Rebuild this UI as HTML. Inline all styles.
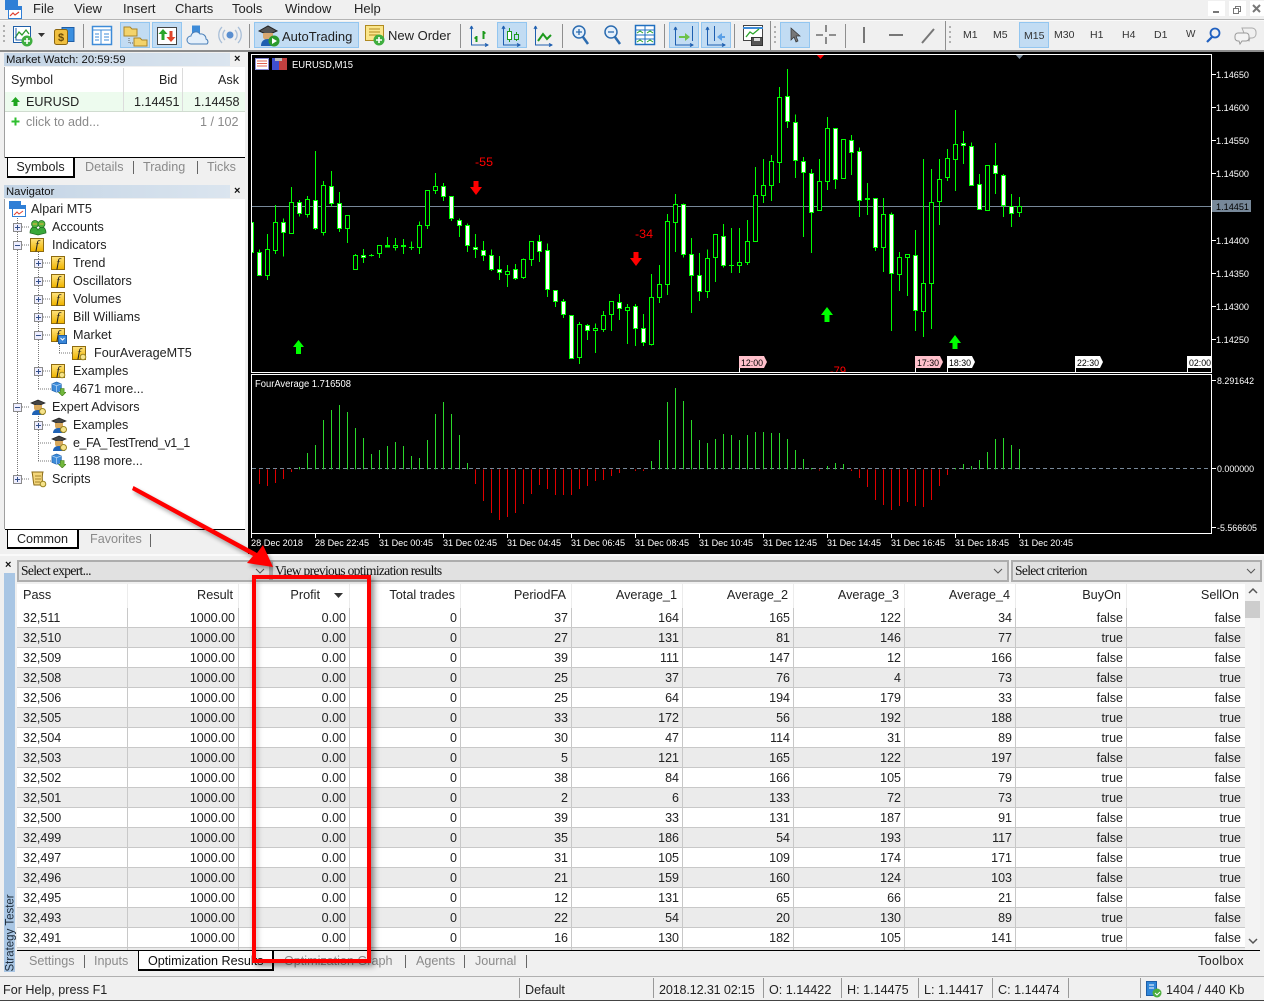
<!DOCTYPE html>
<html lang="en"><head><meta charset="utf-8"><title>MetaTrader 5</title>
<style>
html,body{margin:0;padding:0}
body{width:1264px;height:1001px;position:relative;overflow:hidden;background:#f0f0f0;font-family:"Liberation Sans",sans-serif;font-size:12.6px;color:#222}
.a{position:absolute;white-space:nowrap;line-height:16px}
.m{font-size:13px}
.g{color:#8a8a8a}
.box{position:absolute;background:#fff}
.tb{position:absolute;background:linear-gradient(90deg,#c3d4e5,#dbe5ef);height:13px;font-size:11.3px;line-height:14px;padding-left:2px;color:#111}
.x{position:absolute;font-weight:bold;font-size:11px;line-height:11px;color:#111}
.tab{position:absolute;background:#fff;border:1px solid #000;border-top:0;border-width:0 2px 2px 1px;box-sizing:border-box;text-align:center;line-height:18px}
.sep{position:absolute;width:1px;background:#666}
.f{position:absolute;width:12px;height:12px;background:linear-gradient(#ffe27a,#f0b400);border:1px solid #8d6a10;font:italic 13px/12px "Liberation Serif",serif;color:#222;text-align:center}
.tree{position:absolute;left:0;top:0}
.combo{position:absolute;top:560px;height:18px;background:#e1e1e1;border:2px solid #adadad;font-family:"Liberation Serif",serif;font-size:13.5px;line-height:18px;padding-left:2px;letter-spacing:-.65px;white-space:nowrap;overflow:hidden;color:#111}
#tbl{position:absolute;left:17px;top:584px;height:367px;width:1228px;overflow:hidden;background:#fff}
table{border-collapse:separate;border-spacing:0;table-layout:fixed;width:1228px;font-size:12.5px}
th{height:24px;font-weight:normal;font-size:12.7px;text-align:right;padding:0 5px 2px 0;border-right:1px solid #ececec;box-sizing:border-box;color:#222}
td{height:20px;box-sizing:border-box;text-align:right;padding:2px 3px 0 0;border-right:1px solid #c8c8c8;border-bottom:1px solid #c8c8c8;line-height:17px;overflow:hidden}
tr:nth-child(even) td{background:#ebebeb}
td:first-child{text-align:left;padding-left:6px}
th:first-child{text-align:left;padding-left:6px}
th:last-child{padding-right:6px}
td:last-child{padding-right:4px;border-right:0}
th:last-child{border-right:0}
</style></head><body>

<!-- top toolbars -->
<svg class="tree" width="1264" height="54" viewBox="0 0 1264 54">
<rect x="0" y="19" width="1264" height="1" fill="#b4b4b4"/>
<rect x="0" y="20" width="1264" height="1" fill="#fafafa"/>
<rect x="0" y="50" width="1264" height="2" fill="#8c8c8c"/>
<!-- app icon -->
<rect x="5" y="0" width="13" height="10" fill="#2f7fd6"/>
<rect x="8.5" y="6.5" width="13" height="12" fill="#fff" stroke="#2f7fd6"/>
<rect x="9" y="7" width="12" height="3" fill="#2f7fd6"/>
<path d="M10 16l3-3 2 2 4-3" fill="none" stroke="#e04030" stroke-width="1.2"/>
<!-- highlights -->
<g fill="#c2dcf3" stroke="#93c6f0">
<rect x="120.5" y="22.5" width="29" height="25"/>
<rect x="152.5" y="22.5" width="29" height="25"/>
<rect x="254.5" y="22.5" width="104" height="25"/>
<rect x="497.5" y="22.5" width="29" height="25"/>
<rect x="669.5" y="22.5" width="29" height="25"/>
<rect x="701.5" y="22.5" width="29" height="25"/>
<rect x="780.5" y="22.5" width="29" height="25"/>
<rect x="1019.5" y="22.5" width="29" height="25"/>
</g>
<!-- separators -->
<g fill="#8f8f8f">
<rect x="83" y="24" width="1" height="24"/><rect x="249" y="24" width="1" height="24"/>
<rect x="460" y="24" width="1" height="24"/><rect x="562" y="24" width="1" height="24"/>
<rect x="664" y="24" width="1" height="24"/><rect x="734" y="24" width="1" height="24"/>
<rect x="770" y="21" width="1" height="29"/><rect x="845" y="24" width="1" height="24"/>
<rect x="945" y="21" width="1" height="29"/>
</g>
<!-- grips -->
<g fill="#b0b0b0"><rect x="3" y="25" width="2" height="2"/><rect x="3" y="30" width="2" height="2"/><rect x="3" y="35" width="2" height="2"/><rect x="3" y="40" width="2" height="2"/>
<rect x="774" y="26" width="2" height="2"/><rect x="774" y="31" width="2" height="2"/><rect x="774" y="36" width="2" height="2"/><rect x="774" y="41" width="2" height="2"/>
<rect x="949" y="26" width="2" height="2"/><rect x="949" y="31" width="2" height="2"/><rect x="949" y="36" width="2" height="2"/><rect x="949" y="41" width="2" height="2"/></g>
<!-- new chart -->
<rect x="13.5" y="26.5" width="17" height="16" fill="#fff" stroke="#1f5fa8"/><path d="M15 38l4-6 3 3 4-5 3 4" fill="none" stroke="#2a9a2a" stroke-width="1.3"/><path d="M16 28v12h12" fill="none" stroke="#1f5fa8"/>
<circle cx="27" cy="41" r="5.5" fill="#3fae3f"/><path d="M27 38v6M24 41h6" stroke="#fff" stroke-width="1.6"/>
<path d="M38 33h7l-3.500 4z" fill="#333"/>
<!-- dollar -->
<rect x="62" y="27.500" width="12" height="14" fill="#3a8fe0" stroke="#1d5ea8"/>
<rect x="54.500" y="29.500" width="13" height="15" rx="2" fill="#f0c040" stroke="#8a6510"/><text x="61" y="41" font-size="11" font-weight="bold" text-anchor="middle" fill="#6a4a05">$</text>
<!-- market watch -->
<rect x="92.500" y="26.500" width="19" height="18" fill="#fff" stroke="#3d8bd8" stroke-width="1.500"/><path d="M92 30h20M101 30v14M95 34h4M95 37h4M95 40h4M104 34h5M104 37h5M104 40h5" stroke="#3d8bd8"/>
<!-- navigator folders -->
<path d="M124 27h6l2 2h5v7h-13z" fill="#f3d36b" stroke="#a8842a"/><path d="M134 38h6l2 2h5v6h-13z" fill="#f3d36b" stroke="#a8842a"/><path d="M129 38v5h4" fill="none" stroke="#666" stroke-dasharray="1 1"/>
<!-- toolbox -->
<rect x="157.500" y="27.500" width="19" height="17" fill="#fff" stroke="#444"/><path d="M163 29l-4.500 5h3v6h3v-6h3z" fill="#2aa52a"/><path d="M171 42l4.500-5h-3v-6h-3v6h-3z" fill="#e0452a"/>
<!-- cloud -->
<rect x="192" y="25.500" width="8" height="10" fill="#3d8bd8"/><path d="M191 44a4 4 0 0 1 0-8 5 5 0 0 1 9-2 5 5 0 0 1 6 5 3 3 0 0 1 1 5z" fill="#e4effa" stroke="#4a7fb8"/>
<!-- radar -->
<circle cx="230" cy="35" r="3.500" fill="#5a8fd0"/><path d="M225 30a7 7 0 0 0 0 10M235 30a7 7 0 0 1 0 10M222 27a11.500 11.500 0 0 0 0 16M238 27a11.500 11.500 0 0 1 0 16" fill="none" stroke="#a9bfd8" stroke-width="1.300"/>
<!-- autotrading -->
<path d="M259 31l9-5 9 5-9 4z" fill="#555" stroke="#222"/><path d="M263 33v4c0 2 3 3 5 3s5-1 5-3v-4" fill="#d8a770"/>
<path d="M261 46c0-5 3-7 7-7s7 2 7 7z" fill="#1f5fb0"/><circle cx="274" cy="41" r="5.500" fill="#2c9a2c"/><path d="M272 38l5 3-5 3z" fill="#fff"/>
<!-- new order -->
<rect x="365.500" y="25.500" width="18" height="15" fill="#fbe68a" stroke="#b08a20"/><path d="M369 29h11M369 32h11M369 35h11" stroke="#b08a20"/><circle cx="379" cy="40" r="5.500" fill="#3fae3f"/><path d="M379 37v6M376 40h6" stroke="#fff" stroke-width="1.600"/>
<!-- chart type -->
<g fill="none" stroke="#1f5fb0"><path d="M471.500 26v19h17M471.500 26l-1.500 3M471.500 26l1.500 3M488 45l-3-1.500M488 45l-3 1.500"/>
<path d="M503.500 26v19h17M503.500 26l-1.500 3M503.500 26l1.500 3M520 45l-3-1.500M520 45l-3 1.500"/>
<path d="M535.500 26v19h17M535.500 26l-1.500 3M535.500 26l1.500 3M552 45l-3-1.500M552 45l-3 1.500"/></g>
<path d="M476.500 36v6M476.500 38h-2M483.500 31v8M483.500 33h2" stroke="#1d9a1d" stroke-width="2" fill="none"/>
<path d="M509.500 28v14M516.500 32v9" stroke="#1d9a1d"/><rect x="507.500" y="31.500" width="4" height="8" fill="#fff" stroke="#1d9a1d"/><rect x="514.500" y="34.500" width="4" height="5" fill="#c2dcf3" stroke="#1d9a1d"/>
<path d="M538 41l5-7 4 5 4-4" fill="none" stroke="#1d9a1d" stroke-width="2"/>
<!-- zoom -->
<g fill="none"><circle cx="579" cy="32" r="6" fill="#e5f0fb" stroke="#2c6cb0" stroke-width="1.500"/><path d="M576 32h6M579 29v6" stroke="#2c6cb0" stroke-width="1.300"/><path d="M583 37l5 7" stroke="#2c6cb0" stroke-width="2.500"/>
<circle cx="611" cy="32" r="6" fill="#e5f0fb" stroke="#2c6cb0" stroke-width="1.500"/><path d="M608 32h6" stroke="#2c6cb0" stroke-width="1.300"/><path d="M615 37l5 7" stroke="#2c6cb0" stroke-width="2.500"/></g>
<!-- tile -->
<rect x="635.500" y="25.500" width="19" height="19" fill="#fff" stroke="#1f6fc0" stroke-width="1.500"/><path d="M635 30h20M645 25v20M635 35h20M635 39h20" stroke="#1f6fc0"/><path d="M637 33l3-2 3 2M647 33l3-2 3 2M637 42l3-2 3 2M647 42l3-2 3 2" fill="none" stroke="#2aa52a"/>
<!-- autoscroll / shift -->
<g fill="none" stroke="#1f5fb0"><path d="M675.500 27v18h18M675.500 27l-1.500 3M675.500 27l1.500 3M693 45l-3-1.500M693 45l-3 1.500"/><path d="M707.500 27v18h18M707.500 27l-1.500 3M707.500 27l1.500 3M725 45l-3-1.500M725 45l-3 1.500"/><path d="M692.500 26v15M714.500 26v15"/></g>
<path d="M679 38h6v3l5-4-5-4v3h-6z" fill="#6cc24a"/><path d="M725 38h-3v3l-5-4 5-4v3h3z" fill="#5a9fe6"/>
<!-- template -->
<rect x="743.500" y="25.500" width="19" height="15" fill="#fff" stroke="#444"/><path d="M743 28h20" stroke="#3d8bd8" stroke-width="2"/><path d="M746 37l4-5 3 2 6-5" fill="none" stroke="#2aa52a" stroke-width="1.300"/><rect x="751.500" y="37.500" width="11" height="8" fill="#555" stroke="#333"/><rect x="754" y="38" width="6" height="3" fill="#ddd"/>
<!-- cursor/tools -->
<path d="M791 28l9 8h-4l2 5-2 1-2-5-3 3z" fill="#777" stroke="#333" stroke-width=".7"/>
<path d="M826 25v7M826 37v7M816 35h7M829 35h7" stroke="#555" stroke-width="1.300"/>
<path d="M864 27v16" stroke="#777" stroke-width="2"/><path d="M889 35h14" stroke="#777" stroke-width="2"/><path d="M922 43l12-14" stroke="#777" stroke-width="2"/>
<!-- search / chat -->
<circle cx="1215" cy="33" r="4.500" fill="none" stroke="#2060c0" stroke-width="1.800"/><path d="M1212 37l-5 5" stroke="#2060c0" stroke-width="2.200"/>
<path d="M1242 28h10a4 4 0 0 1 4 4v2a4 4 0 0 1-4 4h-2l-1 3-3-3z" fill="#f0f0f0" stroke="#aaa"/><path d="M1238 33h8a3 3 0 0 1 3 3v2a3 3 0 0 1-3 3h-4l-2 3-1-3h-1a3 3 0 0 1-3-3v-2a3 3 0 0 1 3-3z" fill="#f4f4f4" stroke="#999"/>
<!-- window buttons -->
<rect x="1208" y="1" width="17" height="15" fill="#fff"/><rect x="1229" y="1" width="17" height="15" fill="#fff"/><rect x="1250" y="1" width="14" height="15" fill="#fff"/>
<rect x="1213" y="11" width="6" height="2" fill="#777"/>
<rect x="1235.500" y="6.500" width="5" height="5" fill="none" stroke="#777"/><rect x="1233.500" y="8.500" width="5" height="5" fill="#fff" stroke="#777"/>
<path d="M1253 5l7 7M1260 5l-7 7" stroke="#777" stroke-width="2"/>
</svg>

<!-- menu -->
<div class="a m" style="left:33px;top:1px">File</div>
<div class="a m" style="left:74px;top:1px">View</div>
<div class="a m" style="left:123px;top:1px">Insert</div>
<div class="a m" style="left:175px;top:1px">Charts</div>
<div class="a m" style="left:232px;top:1px">Tools</div>
<div class="a m" style="left:285px;top:1px">Window</div>
<div class="a m" style="left:354px;top:1px">Help</div>
<div class="a m" style="left:282px;top:29px">AutoTrading</div>
<div class="a m" style="left:388px;top:28px">New Order</div>
<div class="a" style="left:963px;top:27px;font-size:10.5px;color:#333">M1</div>
<div class="a" style="left:993px;top:27px;font-size:10.5px;color:#333">M5</div>
<div class="a" style="left:1024px;top:28px;font-size:10.5px;color:#333">M15</div>
<div class="a" style="left:1054px;top:27px;font-size:10.5px;color:#333">M30</div>
<div class="a" style="left:1090px;top:27px;font-size:10.5px;color:#333">H1</div>
<div class="a" style="left:1122px;top:27px;font-size:10.5px;color:#333">H4</div>
<div class="a" style="left:1154px;top:27px;font-size:10.5px;color:#333">D1</div>
<div class="a" style="left:1186px;top:27px;font-size:10px;color:#333">W</div>

<!-- Market watch -->
<div class="tb" style="left:4px;top:53px;width:224px">Market Watch: 20:59:59</div>
<div class="x" style="left:234px;top:54px">×</div>
<div class="box" style="left:4px;top:67px;width:241px;height:91px;border-left:1px solid #a0a0a0;box-sizing:border-box"></div>
<div class="box" style="left:5px;top:92px;width:240px;height:19px;background:#edfbee;border-bottom:1px solid #d0dcd0"></div>
<div class="sep" style="left:123px;top:68px;height:43px;background:#dcdcdc"></div>
<div class="sep" style="left:182px;top:68px;height:43px;background:#dcdcdc"></div>
<div class="a" style="left:11px;top:72px">Symbol</div>
<div class="a" style="left:159px;top:72px">Bid</div>
<div class="a" style="left:218px;top:72px">Ask</div>
<svg class="tree" style="left:10px;top:96px" width="11" height="11"><path d="M5.500 1L10 6H7.500V10h-4V6H1z" fill="#1fa51f"/></svg>
<div class="a" style="left:26px;top:94px">EURUSD</div>
<div class="a" style="left:134px;top:94px">1.14451</div>
<div class="a" style="left:194px;top:94px">1.14458</div>
<svg class="tree" style="left:10px;top:116px" width="11" height="11"><path d="M5.500 1.500v8M1.500 5.500h8" stroke="#2fbf2f" stroke-width="2"/></svg>
<div class="a g" style="left:26px;top:114px">click to add...</div>
<div class="a g" style="left:200px;top:114px">1 / 102</div>
<div class="box" style="left:5px;top:157px;width:240px;height:1px;background:#000"></div>
<div class="tab" style="left:7px;top:158px;width:68px;height:20px;border-right:2px solid #000">Symbols</div>
<div class="a g" style="left:85px;top:159px">Details</div><div class="sep" style="left:133px;top:161px;height:13px"></div>
<div class="a g" style="left:143px;top:159px">Trading</div><div class="sep" style="left:197px;top:161px;height:13px"></div>
<div class="a g" style="left:207px;top:159px">Ticks</div>

<!-- Navigator -->
<div class="tb" style="left:4px;top:185px;width:224px">Navigator</div>
<div class="x" style="left:234px;top:186px">×</div>
<div class="box" style="left:4px;top:199px;width:241px;height:330px;border-left:1px solid #a0a0a0;box-sizing:border-box"></div>
<div class="box" style="left:5px;top:529px;width:240px;height:1px;background:#000"></div>
<div class="tab" style="left:7px;top:530px;width:72px;height:19px">Common</div>
<div class="a g" style="left:90px;top:531px">Favorites</div><div class="sep" style="left:150px;top:534px;height:13px"></div>

<svg class="tree" width="250" height="500" viewBox="0 0 250 500">
<defs>
<symbol id="plus" viewBox="0 0 9 9"><rect x=".5" y=".5" width="8" height="8" fill="#eef" stroke="#8a8a8a"/><path d="M2 4.500h5M4.500 2v5" stroke="#33508a"/></symbol>
<symbol id="minus" viewBox="0 0 9 9"><rect x=".5" y=".5" width="8" height="8" fill="#eef" stroke="#8a8a8a"/><path d="M2 4.500h5" stroke="#33508a"/></symbol>
<symbol id="hat" viewBox="0 0 16 16"><path d="M1 4l7-3 7 3-7 3z" fill="#444" stroke="#222" stroke-width=".7"/><path d="M4 6v3c0 2 2 3 4 3s4-1 4-3V6" fill="#d8a85c"/><path d="M2 16c0-3 2-5 6-5s6 2 6 5z" fill="#1f62b5"/><circle cx="12.500" cy="12.500" r="3" fill="#f6e38a" stroke="#9a8420"/></symbol>
<symbol id="cube" viewBox="0 0 16 16"><path d="M1 3l5-2 5 2v7l-5 2-5-2z" fill="#3d8bd8" stroke="#1d5ea8" stroke-width=".7"/><path d="M6 5v7M1 3l5 2 5-2" stroke="#b8d8f8" fill="none" stroke-width=".8"/><path d="M10 8h4v4h2l-4 4-4-4h2z" fill="#72b83c" stroke="#3f7a18" stroke-width=".6"/></symbol>
</defs>
<!-- dotted lines -->
<g stroke="#777" stroke-dasharray="1 1" fill="none">
<path d="M17.500 214V479M38.500 250V389M38.500 412V461M59.500 340V353"/>
<path d="M22 227h8M22 245h8M22 407h8M22 479h8M43 263h8M43 281h8M43 299h8M43 317h8M43 335h8M43 371h8M43 425h8M38 389h13M38 443h13M38 461h13M59 353h13"/>
</g>
<!-- root icon -->
<rect x="9" y="201" width="12" height="8" fill="#2f7fd6"/><rect x="12.500" y="205.500" width="13" height="11" fill="#fff" stroke="#2f7fd6"/><rect x="13" y="206" width="12" height="3" fill="#2f7fd6"/><path d="M14 215l3-3 2 2 4-3" fill="none" stroke="#e04030"/>
<!-- expanders -->
<use href="#plus" x="13" y="223" width="9" height="9"/><use href="#minus" x="13" y="241" width="9" height="9"/>
<use href="#plus" x="34" y="259" width="9" height="9"/><use href="#plus" x="34" y="277" width="9" height="9"/><use href="#plus" x="34" y="295" width="9" height="9"/><use href="#plus" x="34" y="313" width="9" height="9"/>
<use href="#minus" x="34" y="331" width="9" height="9"/><use href="#plus" x="34" y="367" width="9" height="9"/>
<use href="#minus" x="13" y="403" width="9" height="9"/><use href="#plus" x="34" y="421" width="9" height="9"/><use href="#plus" x="13" y="475" width="9" height="9"/>
<!-- accounts -->
<path d="M30 233c0-4 2-6 4-6s3 1 4 3c1-2 3-3 4-3 2 0 4 2 4 6l-8 2z" fill="#39a83a" stroke="#1f6a20" stroke-width=".7"/><circle cx="35" cy="224" r="3.500" fill="#55b53c" stroke="#1f6a20" stroke-width=".7"/><circle cx="41.500" cy="224" r="3.500" fill="#55b53c" stroke="#1f6a20" stroke-width=".7"/><path d="M33 224h4M39.500 224h4" stroke="#f0b040"/>
<use href="#cube" x="51" y="381" width="15" height="15"/><use href="#cube" x="51" y="453" width="15" height="15"/>
<use href="#hat" x="30" y="399" width="16" height="16"/><use href="#hat" x="51" y="417" width="16" height="16"/><use href="#hat" x="51" y="435" width="16" height="16"/>
<!-- scripts -->
<path d="M32 472h11c-1 3-1 9 0 13H34c-1-4-1-9-2-13z" fill="#f4d67a" stroke="#8a6a15"/><path d="M35 476h6M35 479h6M35 482h5" stroke="#8a6a15" stroke-width=".7"/><circle cx="43" cy="484" r="2.800" fill="#f6e38a" stroke="#9a8420"/>
</svg>
<i class="f" style="left:30px;top:238px">f</i>
<i class="f" style="left:51px;top:256px">f</i>
<i class="f" style="left:51px;top:274px">f</i>
<i class="f" style="left:51px;top:292px">f</i>
<i class="f" style="left:51px;top:310px">f</i>
<i class="f" style="left:51px;top:328px">f</i>
<svg class="tree" style="left:58px;top:334px" width="10" height="10"><rect x=".5" y="1.500" width="8" height="8" fill="#3a86d8" stroke="#1d5ea8"/><path d="M2.500 4l2 2 2-2" fill="none" stroke="#fff"/></svg>
<i class="f" style="left:72px;top:346px">f</i>
<i class="f" style="left:51px;top:364px">f</i>
<svg class="tree" style="left:59px;top:343px" width="30" height="40"><circle cx="24" cy="14" r="2.800" fill="#f6e38a" stroke="#9a8420"/><circle cx="3" cy="32" r="2.800" fill="#f6e38a" stroke="#9a8420"/></svg>
<div class="a" style="left:31px;top:201px">Alpari MT5</div>
<div class="a" style="left:52px;top:219px">Accounts</div>
<div class="a" style="left:52px;top:237px">Indicators</div>
<div class="a" style="left:73px;top:255px">Trend</div>
<div class="a" style="left:73px;top:273px">Oscillators</div>
<div class="a" style="left:73px;top:291px">Volumes</div>
<div class="a" style="left:73px;top:309px">Bill Williams</div>
<div class="a" style="left:73px;top:327px">Market</div>
<div class="a" style="left:94px;top:345px">FourAverageMT5</div>
<div class="a" style="left:73px;top:363px">Examples</div>
<div class="a" style="left:73px;top:381px">4671 more...</div>
<div class="a" style="left:52px;top:399px">Expert Advisors</div>
<div class="a" style="left:73px;top:417px">Examples</div>
<div class="a" style="left:73px;top:435px;letter-spacing:-.5px">e_FA_TestTrend_v1_1</div>
<div class="a" style="left:73px;top:453px">1198 more...</div>
<div class="a" style="left:52px;top:471px">Scripts</div>

<!-- Chart -->
<svg class="tree" style="left:248px;top:52px" width="1016" height="502" viewBox="248 52 1016 502" font-family="Liberation Sans, sans-serif">
<defs><clipPath id="c1"><rect x="252" y="55" width="959" height="317"/></clipPath></defs>
<rect x="248" y="52" width="1016" height="502" fill="#000"/>
<g fill="none" stroke="#fff" shape-rendering="crispEdges">
<path d="M251.500 372.500V54.500H1211.500V372.500"/><path d="M251 372.500H1212"/>
<rect x="251.500" y="374.500" width="960" height="159"/>
<path d="M251.500 534v4M315.500 534v4M379.500 534v4M443.500 534v4M507.500 534v4M571.500 534v4M635.500 534v4M699.500 534v4M763.500 534v4M827.500 534v4M891.500 534v4M955.500 534v4M1019.500 534v4"/>
<path d="M1212 74.500h4M1212 107.500h4M1212 140.500h4M1212 173.500h4M1212 240.500h4M1212 273.500h4M1212 306.500h4M1212 339.500h4M1212 380.500h4M1212 468.500h4M1212 527.500h4"/>
</g>
<path d="M252 206.500H1211" stroke="#778899" shape-rendering="crispEdges"/>
<path d="M252 468.500H1211" stroke="#778899" stroke-dasharray="4 3" shape-rendering="crispEdges"/>
<g clip-path="url(#c1)">
<g transform="translate(250 50) scale(.33333)" stroke="#0f0" stroke-width="3" shape-rendering="crispEdges">
<path fill="none" d="M28.500 598V677M52.500 552V690M76.500 465V612M100.500 505V620M124.500 411V551M148.500 450V500M172.500 438V503M196.500 303V540M220.500 393V557M244.500 363V470M268.500 426V546M292.500 495V579M316.500 612V659M340.500 597V639M364.500 612V620M388.500 586V624M412.500 561V593M436.500 564V602M460.500 567V612M484.500 575V600M508.500 514V612M532.500 421V537M556.500 369V432M580.500 399V453M604.500 438V513M628.500 505V561M652.500 520V606M676.500 552V624M700.500 573V633M724.500 598V663M748.500 618V690M772.500 645V711M796.500 642V690M820.500 625V687M844.500 574V648M868.500 555V636M892.500 580V741M916.500 721V771M940.500 747V804M988.500 816V942M1012.500 822V870M1036.500 820V909M1060.500 783V846M1084.500 754V843M1108.500 732V810M1132.500 762V882M1156.500 762V888M1180.500 792V888"/>
<path fill="#000" d="M46.500 598h12v79h-12zM70.500 517h12v84h-12zM118.500 457h12v94h-12zM166.500 448h12v46h-12zM214.500 406h12v142h-12zM286.500 496h12v40h-12zM310.500 616h12v43h-12zM382.500 586h12v25h-12zM430.500 586h12v7h-12zM502.500 526h12v67h-12zM526.500 421h12v106h-12zM550.500 409h12v13h-12zM766.500 664h12v10h-12zM814.500 628h12v55h-12zM838.500 574h12v55h-12zM982.500 823h12v100h-12zM1030.500 835h12v7h-12zM1054.500 796h12v43h-12zM1078.500 754h12v40h-12zM1126.500 772h12v10h-12z"/>
<path fill="#fff" d="M-1.500 517h12v90h-12zM22.500 607h12v70h-12zM94.500 517h12v30h-12zM142.500 457h12v33h-12zM190.500 451h12v85h-12zM238.500 409h12v52h-12zM262.500 460h12v76h-12zM334.500 616h12v7h-12zM574.500 409h12v31h-12zM598.500 439h12v67h-12zM622.500 511h12v16h-12zM646.500 526h12v61h-12zM670.500 592h12v6h-12zM694.500 601h12v16h-12zM718.500 616h12v43h-12zM742.500 658h12v9h-12zM790.500 658h12v28h-12zM862.500 574h12v30h-12zM886.500 601h12v117h-12zM910.500 721h12v34h-12zM934.500 754h12v40h-12zM958.500 796h12v130h-12zM1006.500 826h12v16h-12zM1102.500 757h12v19h-12zM1150.500 769h12v67h-12zM1174.500 835h12v43h-12z"/>
<path fill="#0f0" d="M358.500 616h12v1h-12zM406.500 586h12v5h-12zM454.500 586h12v4h-12zM478.500 592h12v1h-12z"/>
</g>
<g transform="translate(640 50) scale(.33333)" stroke="#0f0" stroke-width="3" shape-rendering="crispEdges">
<path fill="none" d="M34.500 672V886M58.500 645V759M82.500 492V735M106.500 432V606M130.500 460V623M154.500 564V789M178.500 609V753M202.500 598V744M226.500 553V696M250.500 522V653M274.500 534V669M298.500 534V669M322.500 510V645M346.500 351V575M370.500 327V459M394.500 315V453M418.500 111V399M442.500 57V234M466.500 193V384M490.500 321V561M514.500 357V609M538.500 327V483M562.500 201V420M586.500 235V417M610.500 268V387M634.500 255V375M658.500 292V501M682.500 399V495M706.500 445V603M730.500 444V666M754.500 487V843M778.500 606V723M802.500 612V738M826.500 540V843M850.500 327V861M874.500 357V837M898.500 327V525M922.500 297V393M946.500 180V423M970.500 243V342M994.500 277V408M1018.500 372V480M1042.500 345V483M1066.500 279V432M1090.500 372V501M1114.500 432V531M1138.500 441V501M274.500 646V647"/>
<path fill="#000" d="M28.500 742h12v142h-12zM52.500 703h12v40h-12zM76.500 514h12v190h-12zM100.500 463h12v55h-12zM196.500 625h12v100h-12zM220.500 553h12v70h-12zM292.500 637h12v10h-12zM316.500 574h12v64h-12zM340.500 436h12v139h-12zM364.500 406h12v31h-12zM388.500 334h12v73h-12zM412.500 142h12v196h-12zM532.500 394h12v88h-12zM556.500 235h12v160h-12zM604.500 268h12v118h-12zM724.500 493h12v100h-12zM772.500 622h12v52h-12zM796.500 613h12v10h-12zM844.500 700h12v85h-12zM868.500 457h12v244h-12zM892.500 388h12v67h-12zM916.500 325h12v58h-12zM940.500 283h12v46h-12zM1036.500 346h12v136h-12zM1132.500 469h12v19h-12z"/>
<path fill="#fff" d="M4.500 835h12v43h-12zM124.500 463h12v150h-12zM148.500 613h12v64h-12zM172.500 676h12v49h-12zM244.500 559h12v88h-12zM436.500 139h12v75h-12zM460.500 217h12v115h-12zM484.500 334h12v33h-12zM508.500 370h12v118h-12zM580.500 235h12v154h-12zM628.500 271h12v37h-12zM652.500 304h12v148h-12zM700.500 445h12v148h-12zM748.500 493h12v178h-12zM820.500 616h12v166h-12zM964.500 280h12v7h-12zM988.500 289h12v117h-12zM1012.500 403h12v76h-12zM1060.500 346h12v25h-12zM1084.500 376h12v91h-12zM1108.500 469h12v22h-12z"/>
<path fill="#0f0" d="M268.500 646h12v1h-12zM676.500 445h12v4h-12z"/>
</g>
<!-- arrows -->
<g fill="#0f0"><path d="M298.500 340l5.500 7h-3v7h-5v-7h-3z"/><path d="M827 307l6 8h-3.500v7h-5v-7h-3.500z"/><path d="M955 335l6 8h-3.500v6h-5v-6h-3.500z"/></g>
<g fill="#f00"><path d="M476 195l-6-8h3.500v-6h5v6h3.500z"/><path d="M636 266l-6-8h3.500v-6h5v6h3.500z"/></g>
<g fill="#f00" font-size="12"><text x="475" y="166" textLength="18" lengthAdjust="spacingAndGlyphs">-55</text><text x="635" y="238" textLength="18" lengthAdjust="spacingAndGlyphs">-34</text><text x="830" y="375" textLength="16" lengthAdjust="spacingAndGlyphs">-79</text></g>
<path d="M816 54h9l-4.500 5z" fill="#f00"/><path d="M1015 54h9l-4.500 5z" fill="#778899"/>
<!-- tags -->
<g stroke="#fff"><path d="M739.500 368v4M915.500 368v4M947.500 368v4M1075.500 368v4M1187.500 368v4" shape-rendering="crispEdges"/></g>
<g font-size="9.500" fill="#000">
<path d="M739 356h25l3 6-3 6h-25z" fill="#ffc0cb"/><text x="741" y="366" textLength="22" lengthAdjust="spacingAndGlyphs">12:00</text>
<path d="M915 356h25l3 6-3 6h-25z" fill="#ffc0cb"/><text x="917" y="366" textLength="22" lengthAdjust="spacingAndGlyphs">17:30</text>
<path d="M947 356h25l3 6-3 6h-25z" fill="#fff"/><text x="949" y="366" textLength="22" lengthAdjust="spacingAndGlyphs">18:30</text>
<path d="M1075 356h25l3 6-3 6h-25z" fill="#fff"/><text x="1077" y="366" textLength="22" lengthAdjust="spacingAndGlyphs">22:30</text>
<path d="M1187 356h24v12h-24z" fill="#fff"/><text x="1189" y="366" textLength="22" lengthAdjust="spacingAndGlyphs">02:00</text>
</g>
</g>
<!-- histogram -->
<g transform="translate(0 370) scale(1 .33333)" stroke-width="1" shape-rendering="crispEdges" fill="none">
<path stroke="#2ad82a" d="M299.500 298V291M307.500 298V249M315.500 298V225M323.500 298V150M331.500 298V120M339.500 298V105M347.500 298V126M355.500 298V174M363.500 298V204M371.500 298V252M379.500 298V240M387.500 298V228M395.500 298V216M403.500 298V228M411.500 298V258M419.500 298V264M427.500 298V210M435.500 298V132M443.500 298V96M451.500 298V132M459.500 298V195M467.500 298V279M651.500 298V273M659.500 298V210M667.500 298V96M675.500 298V54M683.500 298V93M691.500 298V150M699.500 298V210M707.500 298V219M715.500 298V207M723.500 298V192M731.500 298V195M739.500 298V210M747.500 298V195M755.500 298V186M763.500 298V186M771.500 298V189M779.500 298V189M787.500 298V207M795.500 298V240M803.500 298V267M811.500 298V294M827.500 298V288M835.500 298V279M843.500 298V282M955.500 298V294M963.500 298V282M971.500 298V288M979.500 298V270M987.500 298V246M995.500 298V207M1003.500 298V204M1011.500 298V225M1019.500 298V237"/>
<path stroke="#e00000" d="M259.500 298V342M267.500 298V348M275.500 298V339M283.500 298V327M291.500 298V306M475.500 298V342M483.500 298V393M491.500 298V429M499.500 298V450M507.500 298V441M515.500 298V429M523.500 298V402M531.500 298V372M539.500 298V345M547.500 298V357M555.500 298V375M563.500 298V375M571.500 298V375M579.500 298V357M587.500 298V348M595.500 298V333M603.500 298V330M611.500 298V318M619.500 298V309M635.500 298V303M643.500 298V303M819.500 298V302M851.500 298V303M859.500 298V324M867.500 298V351M875.500 298V390M883.500 298V405M891.500 298V420M899.500 298V408M907.500 298V396M915.500 298V408M923.500 298V411M931.500 298V390M939.500 298V348M947.500 298V315"/>
</g>
<!-- chart text -->
<g fill="#fff" font-size="10">
<text x="292" y="68" textLength="61" lengthAdjust="spacingAndGlyphs">EURUSD,M15</text>
<text x="255" y="387" textLength="96" lengthAdjust="spacingAndGlyphs">FourAverage 1.716508</text>
<g font-size="9.500">
<text x="1216" y="78" textLength="33" lengthAdjust="spacingAndGlyphs">1.14650</text>
<text x="1216" y="111" textLength="33" lengthAdjust="spacingAndGlyphs">1.14600</text>
<text x="1216" y="144" textLength="33" lengthAdjust="spacingAndGlyphs">1.14550</text>
<text x="1216" y="177" textLength="33" lengthAdjust="spacingAndGlyphs">1.14500</text>
<text x="1216" y="244" textLength="33" lengthAdjust="spacingAndGlyphs">1.14400</text>
<text x="1216" y="277" textLength="33" lengthAdjust="spacingAndGlyphs">1.14350</text>
<text x="1216" y="310" textLength="33" lengthAdjust="spacingAndGlyphs">1.14300</text>
<text x="1216" y="343" textLength="33" lengthAdjust="spacingAndGlyphs">1.14250</text>
<text x="1217" y="384" textLength="37" lengthAdjust="spacingAndGlyphs">8.291642</text>
<text x="1217" y="472" textLength="37" lengthAdjust="spacingAndGlyphs">0.000000</text>
<text x="1217" y="531" textLength="40" lengthAdjust="spacingAndGlyphs">-5.566605</text>
</g>
<path d="M1212 200h39v12h-39z" fill="#778899"/>
<text x="1216" y="210" font-size="9.500" fill="#000" textLength="33" lengthAdjust="spacingAndGlyphs">1.14451</text>
<g font-size="9.500">
<text x="251" y="546" textLength="52" lengthAdjust="spacingAndGlyphs">28 Dec 2018</text>
<text x="315" y="546" textLength="54" lengthAdjust="spacingAndGlyphs">28 Dec 22:45</text>
<text x="379" y="546" textLength="54" lengthAdjust="spacingAndGlyphs">31 Dec 00:45</text>
<text x="443" y="546" textLength="54" lengthAdjust="spacingAndGlyphs">31 Dec 02:45</text>
<text x="507" y="546" textLength="54" lengthAdjust="spacingAndGlyphs">31 Dec 04:45</text>
<text x="571" y="546" textLength="54" lengthAdjust="spacingAndGlyphs">31 Dec 06:45</text>
<text x="635" y="546" textLength="54" lengthAdjust="spacingAndGlyphs">31 Dec 08:45</text>
<text x="699" y="546" textLength="54" lengthAdjust="spacingAndGlyphs">31 Dec 10:45</text>
<text x="763" y="546" textLength="54" lengthAdjust="spacingAndGlyphs">31 Dec 12:45</text>
<text x="827" y="546" textLength="54" lengthAdjust="spacingAndGlyphs">31 Dec 14:45</text>
<text x="891" y="546" textLength="54" lengthAdjust="spacingAndGlyphs">31 Dec 16:45</text>
<text x="955" y="546" textLength="54" lengthAdjust="spacingAndGlyphs">31 Dec 18:45</text>
<text x="1019" y="546" textLength="54" lengthAdjust="spacingAndGlyphs">31 Dec 20:45</text>
</g>
</g>
<!-- chart mini icons -->
<rect x="255.500" y="58.500" width="13" height="11" fill="#fff" stroke="#8a8ad8"/><path d="M257 61h10M257 63.500h10M257 66h10" stroke="#e06050"/>
<rect x="272" y="58" width="7" height="12" fill="#3f4fd0"/><rect x="279" y="58" width="8" height="12" fill="#c04040"/><rect x="275" y="58" width="7" height="3" fill="#bbb"/>
</svg>

<!-- Strategy Tester -->
<div class="a" style="left:0;top:554px;width:1264px;height:2px;background:#fafafa"></div>
<div class="x" style="left:5px;top:560px">×</div>
<div class="a" style="left:4px;top:573px;width:11px;height:399px;background:#a9c6e4"></div>
<div class="a" style="left:-28px;top:926px;width:77px;height:14px;line-height:14px;font-size:11.5px;transform:rotate(-90deg);color:#1c2a38;text-align:center">Strategy Tester</div>
<div class="combo" style="left:17px;width:248px">Select expert...<svg style="position:absolute;right:4px;top:6px" width="10" height="6"><path d="M1 1l4 4 4-4" fill="none" stroke="#555"/></svg></div>
<div class="combo" style="left:271px;width:732px">View previous optimization results<svg style="position:absolute;right:4px;top:6px" width="10" height="6"><path d="M1 1l4 4 4-4" fill="none" stroke="#555"/></svg></div>
<div class="combo" style="left:1011px;width:245px">Select criterion<svg style="position:absolute;right:4px;top:6px" width="10" height="6"><path d="M1 1l4 4 4-4" fill="none" stroke="#555"/></svg></div>

<div id="tbl"><table>
<colgroup><col style="width:111px"><col style="width:111px"><col style="width:111px"><col style="width:111px"><col style="width:111px"><col style="width:111px"><col style="width:111px"><col style="width:111px"><col style="width:111px"><col style="width:111px"><col style="width:118px"></colgroup>
<thead><tr><th>Pass</th><th>Result</th><th style="padding-right:29px">Profit</th><th>Total trades</th><th>PeriodFA</th><th>Average_1</th><th>Average_2</th><th>Average_3</th><th>Average_4</th><th>BuyOn</th><th>SellOn</th></tr></thead>
<tbody>
<tr><td>32,511</td><td>1000.00</td><td>0.00</td><td>0</td><td>37</td><td>164</td><td>165</td><td>122</td><td>34</td><td>false</td><td>false</td></tr>
<tr><td>32,510</td><td>1000.00</td><td>0.00</td><td>0</td><td>27</td><td>131</td><td>81</td><td>146</td><td>77</td><td>true</td><td>false</td></tr>
<tr><td>32,509</td><td>1000.00</td><td>0.00</td><td>0</td><td>39</td><td>111</td><td>147</td><td>12</td><td>166</td><td>false</td><td>false</td></tr>
<tr><td>32,508</td><td>1000.00</td><td>0.00</td><td>0</td><td>25</td><td>37</td><td>76</td><td>4</td><td>73</td><td>false</td><td>true</td></tr>
<tr><td>32,506</td><td>1000.00</td><td>0.00</td><td>0</td><td>25</td><td>64</td><td>194</td><td>179</td><td>33</td><td>false</td><td>false</td></tr>
<tr><td>32,505</td><td>1000.00</td><td>0.00</td><td>0</td><td>33</td><td>172</td><td>56</td><td>192</td><td>188</td><td>true</td><td>true</td></tr>
<tr><td>32,504</td><td>1000.00</td><td>0.00</td><td>0</td><td>30</td><td>47</td><td>114</td><td>31</td><td>89</td><td>true</td><td>false</td></tr>
<tr><td>32,503</td><td>1000.00</td><td>0.00</td><td>0</td><td>5</td><td>121</td><td>165</td><td>122</td><td>197</td><td>false</td><td>false</td></tr>
<tr><td>32,502</td><td>1000.00</td><td>0.00</td><td>0</td><td>38</td><td>84</td><td>166</td><td>105</td><td>79</td><td>true</td><td>false</td></tr>
<tr><td>32,501</td><td>1000.00</td><td>0.00</td><td>0</td><td>2</td><td>6</td><td>133</td><td>72</td><td>73</td><td>true</td><td>true</td></tr>
<tr><td>32,500</td><td>1000.00</td><td>0.00</td><td>0</td><td>39</td><td>33</td><td>131</td><td>187</td><td>91</td><td>false</td><td>true</td></tr>
<tr><td>32,499</td><td>1000.00</td><td>0.00</td><td>0</td><td>35</td><td>186</td><td>54</td><td>193</td><td>117</td><td>false</td><td>true</td></tr>
<tr><td>32,497</td><td>1000.00</td><td>0.00</td><td>0</td><td>31</td><td>105</td><td>109</td><td>174</td><td>171</td><td>false</td><td>true</td></tr>
<tr><td>32,496</td><td>1000.00</td><td>0.00</td><td>0</td><td>21</td><td>159</td><td>160</td><td>124</td><td>103</td><td>false</td><td>true</td></tr>
<tr><td>32,495</td><td>1000.00</td><td>0.00</td><td>0</td><td>12</td><td>131</td><td>65</td><td>66</td><td>21</td><td>false</td><td>false</td></tr>
<tr><td>32,493</td><td>1000.00</td><td>0.00</td><td>0</td><td>22</td><td>54</td><td>20</td><td>130</td><td>89</td><td>true</td><td>false</td></tr>
<tr><td>32,491</td><td>1000.00</td><td>0.00</td><td>0</td><td>16</td><td>130</td><td>182</td><td>105</td><td>141</td><td>true</td><td>false</td></tr>
<tr><td></td><td></td><td></td><td></td><td></td><td></td><td></td><td></td><td></td><td></td><td></td></tr>
</tbody></table></div>
<svg class="tree" width="1264" height="1001" viewBox="0 0 1264 1001" style="pointer-events:none">
<path d="M334 593h9l-4.500 5z" fill="#333"/>
<rect x="1245" y="584" width="15" height="366" fill="#f3f3f3"/>
<rect x="1245" y="601" width="15" height="17" fill="#cdcdcd"/>
<path d="M1249 593l4-4 4 4" fill="none" stroke="#555" stroke-width="1.500"/>
<path d="M1249 939l4 4 4-4" fill="none" stroke="#555" stroke-width="1.500"/>
</svg>

<!-- bottom tabs -->
<div class="a" style="left:17px;top:950px;width:1243px;height:1px;background:#000"></div>
<div class="a g" style="left:29px;top:953px">Settings</div><div class="sep" style="left:84px;top:955px;height:13px"></div>
<div class="a g" style="left:94px;top:953px">Inputs</div>
<div class="tab" style="left:138px;top:951px;width:136px;height:20px;color:#111;text-align:left;padding-left:9px;line-height:20px">Optimization Results</div>
<div class="a g" style="left:284px;top:953px">Optimization Graph</div><div class="sep" style="left:405px;top:955px;height:13px"></div>
<div class="a g" style="left:416px;top:953px">Agents</div><div class="sep" style="left:464px;top:955px;height:13px"></div>
<div class="a g" style="left:475px;top:953px">Journal</div><div class="sep" style="left:526px;top:955px;height:13px"></div>
<div class="a" style="left:1198px;top:953px;letter-spacing:.35px">Toolbox</div>

<!-- status -->
<div class="a" style="left:0;top:976px;width:1264px;height:1px;background:#b0b0b0"></div>
<div class="a" style="left:0;top:1000px;width:1264px;height:1px;background:#444"></div>
<div class="a" style="left:3px;top:982px">For Help, press F1</div>
<div class="sep" style="left:519px;top:978px;height:20px;background:#999"></div>
<div class="a" style="left:525px;top:982px">Default</div>
<div class="sep" style="left:653px;top:978px;height:20px;background:#999"></div>
<div class="a" style="left:659px;top:982px;letter-spacing:-.15px">2018.12.31 02:15</div>
<div class="sep" style="left:763px;top:978px;height:20px;background:#999"></div>
<div class="a" style="left:769px;top:982px">O: 1.14422</div>
<div class="sep" style="left:841px;top:978px;height:20px;background:#999"></div>
<div class="a" style="left:847px;top:982px">H: 1.14475</div>
<div class="sep" style="left:918px;top:978px;height:20px;background:#999"></div>
<div class="a" style="left:924px;top:982px">L: 1.14417</div>
<div class="sep" style="left:992px;top:978px;height:20px;background:#999"></div>
<div class="a" style="left:998px;top:982px">C: 1.14474</div>
<div class="sep" style="left:1068px;top:978px;height:20px;background:#999"></div>
<div class="sep" style="left:1140px;top:978px;height:20px;background:#999"></div>
<svg class="tree" style="left:1145px;top:980px" width="18" height="19"><rect x="1.500" y="1.500" width="10" height="14" fill="#2f86d8" stroke="#1d5ea8"/><path d="M4 5h5M4 8h5" stroke="#fff"/><circle cx="12" cy="13" r="4.500" fill="#4cae3c"/><path d="M10 13l2 2 3-3" fill="none" stroke="#fff"/></svg>
<div class="a" style="left:1166px;top:982px">1404 / 440 Kb</div>

<!-- annotations -->
<div class="a" style="left:252px;top:575px;width:111px;height:380px;border:4px solid #f00;box-shadow:3px 3px 6px rgba(0,0,0,.45),inset 3px 3px 5px rgba(0,0,0,.15)"></div>
<svg class="tree" width="1264" height="1001" viewBox="0 0 1264 1001" style="pointer-events:none">
<defs><filter id="sh" x="-10%" y="-10%" width="130%" height="130%"><feGaussianBlur stdDeviation="2"/></filter></defs>
<path d="M132 490L133.500 486 257 553 263 545 273 567 247 563 253 556z" fill="#000" opacity=".35" filter="url(#sh)" transform="translate(2 3)"/>
<path d="M132 490L133.500 486 257 553 263 545 273 567 247 563 253 556z" fill="#f00"/>
</svg>
</body></html>
